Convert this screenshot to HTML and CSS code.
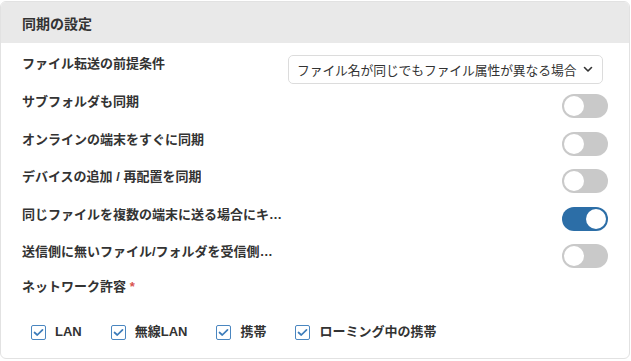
FILE: index.html
```html
<!DOCTYPE html>
<html lang="ja">
<head>
<meta charset="utf-8">
<title>同期の設定</title>
<link rel="stylesheet" href="styles.css">
</head>
<body>
<div class="card">
  <div class="card-header">同期の設定</div>
  <div class="card-body">
    <div class="row row-select">
      <span class="label">ファイル転送の前提条件</span>
      <div class="select">
        <span class="select-text">ファイル名が同じでもファイル属性が異なる場合</span>
        <svg class="chevron" width="10" height="7" viewBox="0 0 10 7"><path d="M1.5 1.5 L5 5 L8.5 1.5" fill="none" stroke="#333" stroke-width="1.6" stroke-linecap="round" stroke-linejoin="round"/></svg>
      </div>
    </div>
    <div class="row"><span class="label">サブフォルダも同期</span><span class="toggle"></span></div>
    <div class="row"><span class="label">オンラインの端末をすぐに同期</span><span class="toggle"></span></div>
    <div class="row"><span class="label">デバイスの追加 / 再配置を同期</span><span class="toggle"></span></div>
    <div class="row"><span class="label">同じファイルを複数の端末に送る場合にキャッシュを使用</span><span class="toggle on"></span></div>
    <div class="row"><span class="label">送信側に無いファイル/フォルダを受信側から削除</span><span class="toggle"></span></div>
    <div class="row row-net"><span class="label">ネットワーク許容 <span class="req">*</span></span></div>
    <div class="checks">
      <label class="check"><span class="box"><svg width="11" height="9" viewBox="0 0 11 9"><path d="M1.5 4.5 L4.3 7 L9.5 1.8" fill="none" stroke="#3d7cba" stroke-width="1.7" stroke-linecap="round" stroke-linejoin="round"/></svg></span><span class="check-text">LAN</span></label>
      <label class="check"><span class="box"><svg width="11" height="9" viewBox="0 0 11 9"><path d="M1.5 4.5 L4.3 7 L9.5 1.8" fill="none" stroke="#3d7cba" stroke-width="1.7" stroke-linecap="round" stroke-linejoin="round"/></svg></span><span class="check-text">無線LAN</span></label>
      <label class="check"><span class="box"><svg width="11" height="9" viewBox="0 0 11 9"><path d="M1.5 4.5 L4.3 7 L9.5 1.8" fill="none" stroke="#3d7cba" stroke-width="1.7" stroke-linecap="round" stroke-linejoin="round"/></svg></span><span class="check-text">携帯</span></label>
      <label class="check"><span class="box"><svg width="11" height="9" viewBox="0 0 11 9"><path d="M1.5 4.5 L4.3 7 L9.5 1.8" fill="none" stroke="#3d7cba" stroke-width="1.7" stroke-linecap="round" stroke-linejoin="round"/></svg></span><span class="check-text">ローミング中の携帯</span></label>
    </div>
  </div>
</div>
</body>
</html>
```
FILE: styles.css
```css
* { box-sizing: border-box; }
html, body { margin: 0; padding: 0; background: #ffffff; }
body {
  font-family: "Liberation Sans", "Noto Sans CJK JP", sans-serif;
  color: #333333;
  width: 631px;
  height: 361px;
  overflow: hidden;
}
.card {
  margin-top: 1px;
  width: 630px;
  height: 358px;
  border: 1px solid #e2e2e2;
  border-radius: 6px;
  overflow: hidden;
}
.card-header {
  height: 41px;
  background: #e9e9e9;
  padding: 0 21px;
  display: flex;
  align-items: center;
  font-size: 14px;
  font-weight: 700;
  color: #333;
}
.card-body {
  padding: 12px 21px 0 21px;
  display: flex;
  flex-direction: column;
  gap: 13.5px;
}
.row {
  display: flex;
  justify-content: space-between;
  align-items: flex-start;
  height: 24px;
}
.row-select {
  height: 29px;
  margin-bottom: -3.5px;
}
.label {
  font-size: 13px;
  font-weight: 700;
  line-height: 16px;
  max-width: 262px;
  white-space: nowrap;
  overflow: hidden;
  text-overflow: ellipsis;
  color: #333;
}
.row-select .label { line-height: 18px; }
.select {
  width: 315px;
  height: 29px;
  margin-right: 5px;
  border: 1px solid #dcdcdc;
  border-radius: 5px;
  display: flex;
  align-items: center;
  justify-content: space-between;
  padding: 0 9px 0 8px;
  font-size: 12.8px;
  color: #333;
}
.select-text { white-space: nowrap; letter-spacing: -0.1px; }
.chevron { display: block; flex: none; }
.toggle {
  position: relative;
  width: 46px;
  height: 24px;
  border-radius: 12px;
  background: #c9c9c9;
  flex: none;
}
.toggle::after {
  content: "";
  position: absolute;
  top: 2px;
  left: 2px;
  width: 20px;
  height: 20px;
  border-radius: 50%;
  background: #ffffff;
}
.toggle.on { background: #2c6ea7; }
.toggle.on::after { left: 24px; }
.row-net { height: 16px; margin-top: -3px; }
.req { color: #d9534f; font-weight: 700; }
.checks {
  display: flex;
  gap: 29px;
  padding-left: 9px;
  margin-top: 16px;
}
.check {
  display: flex;
  align-items: center;
  gap: 9px;
}
.box {
  width: 15px;
  height: 15px;
  border: 1.5px solid #4a86c0;
  border-radius: 2px;
  display: flex;
  align-items: center;
  justify-content: center;
}
.box svg { display: block; }
.check-text {
  font-size: 13px;
  font-weight: 700;
  color: #333;
  line-height: 16px;
}
```
